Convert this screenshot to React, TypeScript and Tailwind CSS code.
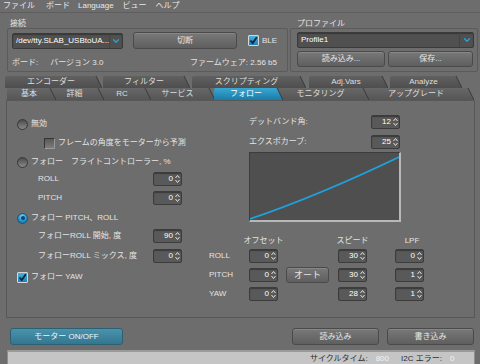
import React from 'react';
import { ChevronDown } from 'lucide-react';

type TabDef = { label: string; w: number; ml: number; active?: boolean };

const topTabs: TabDef[] = [
    { label: 'エンコーダー', w: 97, ml: 5 },
    { label: 'フィルター', w: 87, ml: 1 },
    { label: 'スクリプティング', w: 114, ml: 2 },
    { label: 'Adj.Vars', w: 79, ml: 3 },
    { label: 'Analyze', w: 72, ml: 2 },
];

const bottomTabs: TabDef[] = [
    { label: '基本', w: 49, ml: 7 },
    { label: '詳細', w: 54, ml: -6 },
    { label: 'RC', w: 53, ml: -6 },
    { label: 'サービス', w: 70, ml: -6 },
    { label: 'フォロー', w: 69, ml: -1, active: true },
    { label: 'モニタリング', w: 92, ml: -6 },
    { label: 'アップグレード', w: 111, ml: -6 },
];

function Tab({ t, z, row }: { t: TabDef; z: number; row: 'top' | 'bottom' }) {
    const h = 12;
    const s = 6;
    const d = `M0 ${h} L0 2 Q0 0 2 0 L${t.w - s} 0 L${t.w} ${h} Z`;
    const fill = t.active ? 'url(#tabSel)' : row === 'top' ? 'url(#tabTop)' : 'url(#tabBot)';
    return (
        <div
            className="relative h-[12px] flex items-center justify-center shrink-0"
            style={{ width: t.w, marginLeft: t.ml, zIndex: t.active ? 20 : z }}
        >
            <svg className="absolute inset-0" width={t.w} height={h}>
                <path d={d} fill={fill} />
                <path d={`M${t.w - s} 0 L${t.w} ${h}`} stroke="#3a3a3a" strokeWidth="1" />
            </svg>
            <span className={`relative pr-[5px] text-[8px] leading-none whitespace-nowrap ${t.active ? 'text-white' : 'text-[#dedede]'}`}>
                {t.label}
            </span>
        </div>
    );
}

function Spin({ v }: { v: number }) {
    return (
        <div className="flex h-[14px] w-[29px] rounded-[2px] border border-[#3c3c3c] bg-[#595959] shadow-[inset_0_1px_1px_rgba(0,0,0,0.35)]">
            <div className="flex-1 flex items-center justify-end text-[8px] leading-none text-white">{v}</div>
            <div className="w-[8px] flex flex-col items-center justify-center gap-[2px]">
                <svg width="5" height="3" viewBox="0 0 5 3"><path d="M0.5 3 L2.5 0.5 L4.5 3" stroke="#e0e0e0" strokeWidth="1" fill="none" /></svg>
                <svg width="5" height="3" viewBox="0 0 5 3"><path d="M0.5 0 L2.5 2.5 L4.5 0" stroke="#e0e0e0" strokeWidth="1" fill="none" /></svg>
            </div>
        </div>
    );
}

function Radio({ on }: { on?: boolean }) {
    return on ? (
        <div className="w-[11px] h-[11px] rounded-full border border-[#15577a] bg-[radial-gradient(circle_at_50%_30%,#8ad6f7,#2591c9_55%,#156894)] flex items-center justify-center">
            <div className="w-[4px] h-[4px] rounded-full bg-[#0e4566]" />
        </div>
    ) : (
        <div className="w-[11px] h-[11px] rounded-full border border-[#383838] bg-gradient-to-b from-[#4c4c4c] to-[#8a8a8a]" />
    );
}

function Check({ on }: { on?: boolean }) {
    return on ? (
        <div className="w-[11px] h-[11px] rounded-[1px] border border-[#d6d6d6] bg-gradient-to-b from-[#47b0e2] to-[#1c82b8] flex items-center justify-center">
            <svg width="9" height="9" viewBox="0 0 9 9"><path d="M1.5 4.5 L3.7 7 L7.8 1.2" stroke="#0f2433" strokeWidth="1.8" fill="none" /></svg>
        </div>
    ) : (
        <div className="w-[11px] h-[11px] rounded-[1px] border border-[#353535] border-r-[#9a9a9a] border-b-[#9a9a9a] bg-gradient-to-b from-[#5a5a5a] to-[#7c7c7c]" />
    );
}

function Btn({ children, className }: { children: React.ReactNode; className: string }) {
    return (
        <div className={`flex items-center justify-center rounded-[3px] border border-[#4a4a4a] bg-gradient-to-b from-[#787878] to-[#5f5f5f] text-[8px] leading-none text-[#e6e6e6] shadow-[inset_0_1px_0_rgba(255,255,255,0.12)] ${className}`}>
            {children}
        </div>
    );
}

function Combo({ text, className }: { text: string; className: string }) {
    return (
        <div className={`flex h-[16px] rounded-[2px] border border-[#3a3a3a] bg-[#505050] shadow-[inset_0_1px_1px_rgba(0,0,0,0.3)] ${className}`}>
            <div className="flex-1 flex items-center pl-[3px] text-[8px] leading-none text-white whitespace-nowrap">{text}</div>
            <div className="w-[14px] flex items-center justify-center border-l border-[#444]">
                <ChevronDown size={10} strokeWidth={3} color="#2aa3d8" />
            </div>
        </div>
    );
}

export default function App() {
    return (
        <div className="w-[480px] h-[364px] overflow-hidden bg-[#6d6d6d] text-[#e4e4e4] text-[8px] leading-none font-['Liberation_Sans','Noto_Sans_CJK_JP',sans-serif] flex flex-col">
            <svg width="0" height="0" className="absolute">
                <defs>
                    <linearGradient id="tabTop" x1="0" y1="0" x2="0" y2="1">
                        <stop offset="0" stopColor="#606060" />
                        <stop offset="1" stopColor="#4e4e4e" />
                    </linearGradient>
                    <linearGradient id="tabBot" x1="0" y1="0" x2="0" y2="1">
                        <stop offset="0" stopColor="#676767" />
                        <stop offset="1" stopColor="#555555" />
                    </linearGradient>
                    <linearGradient id="tabSel" x1="0" y1="0" x2="0" y2="1">
                        <stop offset="0" stopColor="#3aa7d3" />
                        <stop offset="1" stopColor="#1a7ba8" />
                    </linearGradient>
                </defs>
            </svg>

            {/* menu bar */}
            <div className="h-[13px] shrink-0 flex items-center pl-[3px] border-b border-[#5e5e5e] text-[#e8e8e8]">
                <span>ファイル</span>
                <span className="ml-[11px]">ボード</span>
                <span className="ml-[8px]">Language</span>
                <span className="ml-[9px]">ビュー</span>
                <span className="ml-[9px]">ヘルプ</span>
            </div>

            {/* connection + profile */}
            <div className="h-[59px] shrink-0 flex">
                <div className="ml-[7px] w-[281px] flex flex-col">
                    <div className="h-[15px] pt-[7px] pl-[3px]">接続</div>
                    <div className="flex-1 border border-[#5b5b5b] rounded-[2px] pt-[3px] pl-[4px] pr-[10px] flex flex-col">
                        <div className="flex items-center">
                            <Combo text="/dev/tty.SLAB_USBtoUA..." className="w-[111px]" />
                            <Btn className="ml-[10px] w-[107px] h-[17px]">切断</Btn>
                            <div className="ml-[11px]"><Check on /></div>
                            <span className="ml-[3px]">BLE</span>
                        </div>
                        <div className="flex items-center mt-[10px]">
                            <span>ボード:</span>
                            <span className="ml-[12px]">バージョン 3.0</span>
                            <span className="ml-auto">ファームウェア: 2.56 b5</span>
                        </div>
                    </div>
                </div>
                <div className="ml-[2px] w-[188px] flex flex-col">
                    <div className="h-[15px] pt-[7px] pl-[7px]">プロファイル</div>
                    <div className="flex-1 border border-[#5b5b5b] rounded-[2px] pt-[3px] pl-[6px] pr-[3px] flex flex-col">
                        <Combo text="Profile1" className="w-[177px]" />
                        <div className="flex mt-[3px] gap-[3px]">
                            <Btn className="w-[88px] h-[16px]">読み込み...</Btn>
                            <Btn className="w-[85px] h-[16px]">保存...</Btn>
                        </div>
                    </div>
                </div>
            </div>

            {/* tabs */}
            <div className="mt-[4px] shrink-0 flex">
                {topTabs.map((t, i) => <Tab key={t.label} t={t} z={10 - i} row="top" />)}
            </div>
            <div className="shrink-0 flex">
                {bottomTabs.map((t, i) => <Tab key={t.label} t={t} z={10 - i} row="bottom" />)}
            </div>

            {/* tab pane */}
            <div className="ml-[6px] mr-[5px] h-[218px] shrink-0 border border-[#585858] flex">
                {/* left column */}
                <div className="w-[199px] pl-[10px] flex flex-col">
                    <div className="mt-[15px] h-[16px] flex items-center">
                        <Radio />
                        <span className="ml-[3px]">無効</span>
                    </div>
                    <div className="mt-[3px] h-[16px] flex items-center pl-[27px]">
                        <Check />
                        <span className="ml-[3px]">フレームの角度をモーターから予測</span>
                    </div>
                    <div className="mt-[3px] h-[16px] flex items-center">
                        <Radio />
                        <span className="ml-[3px] whitespace-pre">フォロー　フライトコントローラー, %</span>
                    </div>
                    <div className="mt-[2px] h-[14px] flex items-center pl-[21px]">
                        <span className="w-[115px]">ROLL</span>
                        <Spin v={0} />
                    </div>
                    <div className="mt-[5px] h-[14px] flex items-center pl-[21px]">
                        <span className="w-[115px]">PITCH</span>
                        <Spin v={0} />
                    </div>
                    <div className="mt-[5px] h-[16px] flex items-center">
                        <Radio on />
                        <span className="ml-[3px]">フォロー PITCH、ROLL</span>
                    </div>
                    <div className="mt-[3px] h-[14px] flex items-center pl-[21px]">
                        <span className="w-[115px]">フォローROLL 開始, 度</span>
                        <Spin v={90} />
                    </div>
                    <div className="mt-[6px] h-[14px] flex items-center pl-[21px]">
                        <span className="w-[115px]">フォローROLL ミックス, 度</span>
                        <Spin v={0} />
                    </div>
                    <div className="mt-[6px] h-[16px] flex items-center">
                        <Check on />
                        <span className="ml-[3px]">フォロー YAW</span>
                    </div>
                </div>

                {/* right column */}
                <div className="flex-1 pl-[3px] flex flex-col">
                    <div className="ml-[40px] w-[152px] flex flex-col">
                        <div className="mt-[14px] h-[14px] flex items-center">
                            <span className="w-[122px]">デットバンド角:</span>
                            <Spin v={12} />
                        </div>
                        <div className="mt-[6px] h-[14px] flex items-center">
                            <span className="w-[122px]">エクスポカーブ:</span>
                            <Spin v={25} />
                        </div>
                        <div className="mt-[3px] w-[152px] h-[70px] bg-[#4f4f4f] border-t border-l border-t-[#3c3c3c] border-l-[#3c3c3c] border-r-2 border-b-2 border-r-[#b8b8b8] border-b-[#b8b8b8]">
                            <svg width="149" height="67" viewBox="0 0 149 67">
                                <path d="M0 66 Q70 42 149 4" stroke="#1ea2de" strokeWidth="1.7" fill="none" />
                            </svg>
                        </div>
                    </div>

                    <div className="mt-[14px] flex flex-col">
                        <div className="h-[10px] flex items-center">
                            <div className="w-[40px]" />
                            <div className="w-[29px] flex justify-center whitespace-nowrap">オフセット</div>
                            <div className="w-[60px]" />
                            <div className="w-[29px] flex justify-center whitespace-nowrap">スピード</div>
                            <div className="w-[28px]" />
                            <div className="w-[29px] flex justify-center whitespace-nowrap pl-[5px]">LPF</div>
                        </div>
                        <div className="mt-[3px] h-[14px] flex items-center">
                            <span className="w-[40px]">ROLL</span>
                            <Spin v={0} />
                            <div className="w-[60px]" />
                            <Spin v={30} />
                            <div className="w-[28px]" />
                            <Spin v={0} />
                        </div>
                        <div className="mt-[5px] h-[14px] flex items-center">
                            <span className="w-[40px]">PITCH</span>
                            <Spin v={0} />
                            <Btn className="ml-[8px] mr-[9px] w-[43px] h-[16px] text-[9px]">オート</Btn>
                            <Spin v={30} />
                            <div className="w-[28px]" />
                            <Spin v={1} />
                        </div>
                        <div className="mt-[5px] h-[14px] flex items-center">
                            <span className="w-[40px]">YAW</span>
                            <Spin v={0} />
                            <div className="w-[60px]" />
                            <Spin v={28} />
                            <div className="w-[28px]" />
                            <Spin v={1} />
                        </div>
                    </div>
                </div>
            </div>

            {/* bottom buttons */}
            <div className="mt-[10px] h-[17px] shrink-0 flex pl-[10px] pr-[6px]">
                <div className="w-[113px] h-[17px] flex items-center justify-center rounded-[3px] border border-[#2b5f72] bg-gradient-to-b from-[#4a93ad] to-[#34768f] text-[#eef6f9]">
                    モーター ON/OFF
                </div>
                <Btn className="ml-auto w-[87px] h-[17px]">読み込み</Btn>
                <Btn className="ml-[8px] w-[87px] h-[17px]">書き込み</Btn>
            </div>

            {/* status bar */}
            <div className="mt-[5px] mx-[7px] mr-[5px] flex-1 bg-[#c5c5c5] border-t-2 border-x border-[#8e8e8e] border-t-[#9a9a9a] flex items-start pt-[3px] pl-[302px] text-[#2e2e2e]">
                <span>サイクルタイム:</span>
                <span className="ml-[8px] text-[#f2f2f2]">800</span>
                <span className="ml-[12px]">I2C エラー:</span>
                <span className="ml-[8px] text-[#f2f2f2]">0</span>
            </div>
        </div>
    );
}
